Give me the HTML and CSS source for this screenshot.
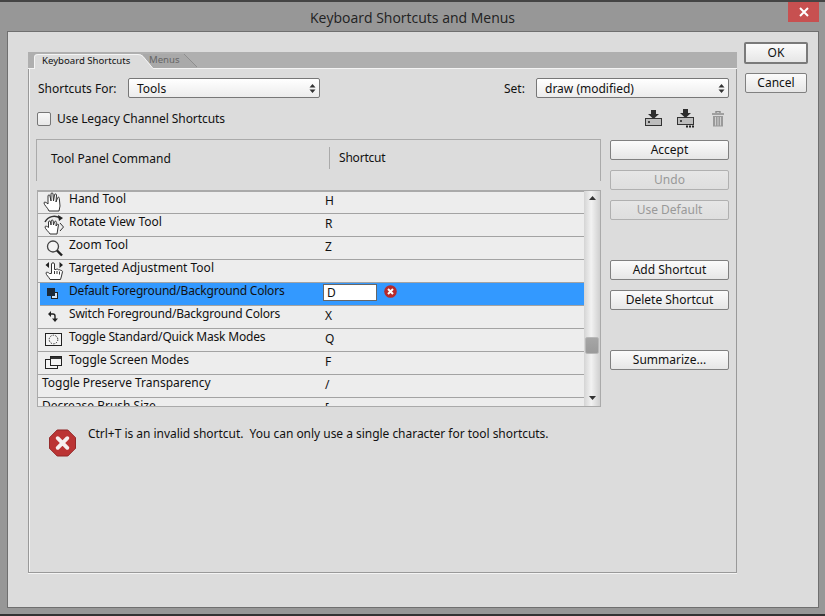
FILE: index.html
```html
<!DOCTYPE html>
<html lang="en">
<head>
<meta charset="utf-8">
<title>Keyboard Shortcuts and Menus</title>
<link rel="stylesheet" href="styles.css">
</head>
<body>
<header class="titlebar">
  <span class="title">Keyboard Shortcuts and Menus</span>
  <div class="close"><svg width="12" height="12" viewBox="0 0 12 12"><path d="M2 2l8 8M10 2l-8 8" stroke="#fff" stroke-width="2"/></svg></div>
</header>
<main class="dialog">
  <section class="panel">
    <div class="tabstrip">
      <div class="tab tab-active">
        <svg class="tab-bg" width="120" height="16" viewBox="0 0 120 16"><path d="M0 16V4Q0 1 4 1H104Q107 1 109 3L119 15V16Z" fill="#dcdcdc"/><path d="M.5 16V4Q.5 1.500 4 1.500H104Q107 1.500 109 3.500L119 15.500" fill="none" stroke="#f4f4f4"/></svg>
        <span class="tab-label">Keyboard Shortcuts</span>
      </div>
      <div class="tab tab-idle">
        <svg class="tab-bg" width="56" height="16" viewBox="0 0 56 16"><path d="M0 2H41L54 15V16H0Z" fill="#a9a9a9"/><path d="M41 2L54 15" fill="none" stroke="#8e8e8e"/></svg>
        <span class="tab-label">Menus</span>
      </div>
    </div>
    <div class="panel-body">
      <div class="row-for">
        <span class="lbl lbl-for">Shortcuts For:</span>
        <div class="select sel-for"><span>Tools</span><svg width="7" height="11" viewBox="0 0 7 11"><path d="M3.500 1L6.500 4.500H.5ZM3.500 10L.5 6.500H6.500Z" fill="#333"/></svg></div>
        <span class="lbl lbl-set">Set:</span>
        <div class="select sel-set"><span>draw (modified)</span><svg width="7" height="11" viewBox="0 0 7 11"><path d="M3.500 1L6.500 4.500H.5ZM3.500 10L.5 6.500H6.500Z" fill="#333"/></svg></div>
      </div>
      <div class="row-legacy">
        <span class="check"></span>
        <span class="lbl lbl-check">Use Legacy Channel Shortcuts</span>
        <div class="tools">
          <svg width="18" height="19" viewBox="0 0 18 19"><path d="M6 1h5v4h3l-5.500 5L3 5h3z" fill="#2d2d2d"/><rect x=".5" y="9.500" width="16" height="7" fill="#bdbdbd" stroke="#333"/><rect x="3" y="12" width="2" height="2" fill="#444"/></svg>
          <svg width="18" height="19" viewBox="0 0 18 19"><path d="M6 0h5v4h3L8.500 9 3 4h3z" fill="#2d2d2d"/><rect x=".5" y="8.500" width="16" height="7" fill="#bdbdbd" stroke="#333"/><rect x="3" y="11" width="2" height="2" fill="#444"/><path d="M9 16.500h2v2H9zM12 16.500h2v2h-2zM15 16.500h2v2h-2z" fill="#222"/></svg>
          <svg width="12" height="16" viewBox="0 0 12 16"><path d="M4 2V.5h4V2M0 3h12" fill="none" stroke="#8c8c8c" stroke-width="1.400"/><path d="M1 5h10v10.500H1z" fill="#9a9a9a"/><path d="M3.500 6v8.500M6 6v8.500M8.500 6v8.500" stroke="#d0d0d0"/></svg>
        </div>
      </div>
      <div class="work">
        <div class="table-col">
          <div class="thead">
            <span class="th th-cmd">Tool Panel Command</span>
            <span class="th th-key">Shortcut</span>
          </div>
          <div class="list">
            <div class="rows">
              <div class="tr">
                <span class="ico"><svg width="22" height="22" viewBox="0 0 22 22"><path d="M6 20c-1-3-5-6-5-8 0-1.500 2-1 4 1V5c0-1.500 2-1.500 2 0l1 5V3c0-1.500 2-1.500 2 0l.5 7 1-6c0-1.500 2-1.300 2 0l-.5 7 1.500-4c.5-1.300 2-1 1.800.5L17 15l-1 5z" fill="#fff" stroke="#333"/></svg></span>
                <span class="name">Hand Tool</span><span class="key">H</span>
              </div>
              <div class="tr">
                <span class="ico"><svg width="22" height="22" viewBox="0 0 22 22"><path d="M2 8C5 2 12 1 17 4" fill="none" stroke="#333" stroke-width="1.500"/><path d="M15 1l5 3-4 3z" fill="#222"/><path d="M7 20c-1-2-5-5-5-7 0-1.300 2-1 3.500.5L5.500 8c0-1.300 2-1.300 2 0l.5 3 .2-4c0-1.300 2-1.300 2 0l.3 4 1-3c.3-1.200 2-1 1.800.3L13 12l1.500-2 1 .5L14 20z" fill="#fff" stroke="#333"/><path d="M17 9l3.500 4-3.500 4" fill="none" stroke="#333"/></svg></span>
                <span class="name">Rotate View Tool</span><span class="key">R</span>
              </div>
              <div class="tr">
                <span class="ico"><svg width="22" height="22" viewBox="0 0 22 22"><circle cx="10" cy="9.500" r="5.500" fill="#f4f4f4" stroke="#444" stroke-width="1.300"/><path d="M14 13.500L19 18.500" stroke="#222" stroke-width="2.400"/></svg></span>
                <span class="name">Zoom Tool</span><span class="key">Z</span>
              </div>
              <div class="tr">
                <span class="ico"><svg width="22" height="22" viewBox="0 0 22 22"><path d="M2.500 5L6 2v6zM20 5l-3.500-3v6z" fill="#222"/><path d="M7 19.500C6 17 3 15 3 13c0-1.200 2-1 3.500.5h2V4c0-1.600 3-1.600 3 0v5.500H13c1-.8 2.300-.4 2.500.5 1-.6 2.200-.2 2.500.7.800-.4 1.500.2 1.500 1l-1 4.300-1 3.500z" fill="#fff" stroke="#333"/><path d="M11.500 11v3M14 11v3M16.500 11.500v3" stroke="#333"/></svg></span>
                <span class="name">Targeted Adjustment Tool</span><span class="key"></span>
              </div>
              <div class="tr tr-sel">
                <span class="ico"><svg width="22" height="22" viewBox="0 0 22 22"><rect x="8.500" y="9.500" width="6" height="6" fill="#cfe3f7" stroke="#222"/><rect x="4" y="5" width="8" height="8" fill="#1c2a3a"/></svg></span>
                <span class="name name-tight">Default Foreground/Background Colors</span>
                <span class="key key-edit"><span class="edit">D</span><svg class="err-small" width="13" height="13" viewBox="0 0 13 13"><circle cx="6.500" cy="6.500" r="6.300" fill="#b52a2c"/><path d="M4 4l5 5M9 4l-5 5" stroke="#fff" stroke-width="2"/></svg></span>
              </div>
              <div class="tr">
                <span class="ico"><svg width="22" height="22" viewBox="0 0 22 22"><path d="M7 8h3a2 2 0 0 1 2 2v3" fill="none" stroke="#222" stroke-width="1.400"/><path d="M8 5v6L5 8zM9 12.500h6L12 16z" fill="#222"/></svg></span>
                <span class="name name-tight">Switch Foreground/Background Colors</span><span class="key">X</span>
              </div>
              <div class="tr">
                <span class="ico"><svg width="22" height="22" viewBox="0 0 22 22"><rect x="2.500" y="4.500" width="16" height="12" fill="#f4f4f4" stroke="#222"/><circle cx="10.500" cy="10.500" r="4.300" fill="none" stroke="#333" stroke-dasharray="1.500 1.200"/></svg></span>
                <span class="name name-tight">Toggle Standard/Quick Mask Modes</span><span class="key">Q</span>
              </div>
              <div class="tr">
                <span class="ico"><svg width="22" height="22" viewBox="0 0 22 22"><rect x="2.500" y="7.500" width="12" height="9" fill="#f4f4f4" stroke="#222"/><rect x="7.500" y="4.500" width="11" height="9" fill="#f4f4f4" stroke="#222"/><path d="M8 5h10v2H8z" fill="#333"/></svg></span>
                <span class="name">Toggle Screen Modes</span><span class="key">F</span>
              </div>
              <div class="tr tr-plain">
                <span class="name">Toggle Preserve Transparency</span><span class="key">/</span>
              </div>
              <div class="tr tr-plain">
                <span class="name">Decrease Brush Size</span><span class="key">[</span>
              </div>
            </div>
            <div class="scrollbar">
              <svg class="arrow-up" width="7" height="4" viewBox="0 0 7 4"><path d="M3.500 0L7 4H0z" fill="#333"/></svg>
              <span class="thumb"></span>
              <svg class="arrow-down" width="7" height="4" viewBox="0 0 7 4"><path d="M3.500 4L0 0h7z" fill="#333"/></svg>
            </div>
          </div>
          <div class="error">
            <svg width="27" height="28" viewBox="0 0 28 28"><path d="M8.500 .5h11l8 8v11l-8 8h-11l-8-8v-11z" fill="#bb3434" stroke="#912424"/><path d="M9 9l10 10M19 9L9 19" stroke="#f6f0f0" stroke-width="4" stroke-linecap="round"/></svg>
            <p class="err-text">Ctrl+T is an invalid shortcut.&nbsp; You can only use a single character for tool shortcuts.</p>
          </div>
        </div>
        <div class="actions">
          <button class="btn">Accept</button>
          <button class="btn btn-off">Undo</button>
          <button class="btn btn-off">Use Default</button>
          <button class="btn btn-gap">Add Shortcut</button>
          <button class="btn">Delete Shortcut</button>
          <button class="btn btn-gap">Summarize...</button>
        </div>
      </div>
    </div>
  </section>
  <aside class="side">
    <button class="btn btn-ok">OK</button>
    <button class="btn btn-cancel">Cancel</button>
  </aside>
</main>
</body>
</html>
```
FILE: styles.css
```css
* { box-sizing: border-box; }
html, body { margin: 0; height: 100%; }
body {
  display: flex;
  flex-direction: column;
  height: 616px;
  background: #979797;
  border-top: 2px solid #444;
  border-bottom: 2px solid #333;
  font: 12px/15px "Noto Sans", sans-serif;
  color: #111;
  overflow: hidden;
}
.titlebar { position: relative; height: 29px; display: flex; align-items: center; justify-content: center; }
.title { font: 14px/18px "Open Sans", sans-serif; color: #222; padding-top: 2px; }
.close { position: absolute; top: 0; right: 6px; width: 31px; height: 20px; background: #c75050; display: flex; align-items: center; justify-content: center; }
.dialog { flex: 1; display: flex; margin: 0 6px 6px 7px; padding: 20px 0 34px 20px; background: #dcdcdc; border: 1px solid #6f6f6f; }
.panel { width: 709px; display: flex; flex-direction: column; border: solid #999; border-width: 0 1px 1px; box-shadow: inset 1px 0 #f4f4f4, 0 1px #f4f4f4; }
.tabstrip { height: 17px; display: flex; align-items: flex-end; margin: 0 -1px; padding-left: 6px; background: #afafaf; border-bottom: 1px solid #f4f4f4; }
.tab { position: relative; height: 16px; flex: none; font-size: 9.600px; line-height: 15px; }
.tab-bg { position: absolute; left: 0; top: 0; }
.tab-label { position: relative; display: block; }
.tab-active { width: 120px; margin-bottom: -1px; padding: 0 0 0 8px; z-index: 1; }
.tab-idle { width: 56px; margin-left: -11px; padding: 0 0 0 6px; color: #666; }
.panel-body { flex: 1; padding: 9px 7px 0 7px; }
.row-for { display: flex; align-items: center; height: 20px; padding-left: 2px; }
.lbl-for { width: 90px; }
.lbl-set { margin-left: auto; width: 32px; }
.select { height: 20px; display: flex; align-items: center; justify-content: space-between; padding: 1px 3px 0 8px; background: linear-gradient(#fff, #ececec); border: 1px solid #777; border-radius: 2px; }
.sel-for { width: 192px; }
.sel-set { width: 193px; }
.row-legacy { display: flex; align-items: center; height: 19px; margin-top: 11px; padding-left: 1px; }
.check { width: 14px; height: 14px; border: 1px solid #777; border-radius: 2px; background: linear-gradient(#f8f8f8, #e8e8e8); margin-right: 6px; }
.lbl-check { letter-spacing: -.07px; }
.tools { margin-left: auto; margin-right: 5px; display: flex; align-items: center; gap: 14px; }
.tools svg:last-child { margin-left: 3px; }
.work { display: flex; margin-top: 11px; }
.table-col { width: 565px; }
.thead { height: 42px; display: flex; align-items: center; border: solid #aaa; border-width: 1px 1px 0; padding-bottom: 5px; }
.th-cmd { width: 292px; padding-left: 14px; }
.th-key { height: 22px; line-height: 22px; padding-left: 9px; border-left: 1px solid #aaa; letter-spacing: -.2px; }
.list { display: flex; height: 217px; margin: 9px 0 0 1px; background: #ededed; border: 1px solid #aaa; box-shadow: inset 0 1px #aaa; overflow: hidden; }
.rows { width: 546px; flex: none; }
.tr { display: flex; height: 23px; border-bottom: 1px solid #a3a3a3; }
.ico { flex: none; width: 31px; padding: 0 0 0 5px; }
.ico svg { display: block; }
.name { width: 256px; flex: none; line-height: 15px; }
.name-tight { letter-spacing: -.2px; }
.key { padding-top: 2px; }
.tr-plain .name { width: 287px; padding-left: 4px; }
.tr-sel { margin-left: 2px; background: #3399ff; }
.tr-sel .ico { width: 29px; padding-left: 3px; }
.key-edit { display: flex; align-items: flex-start; padding-top: 1px; margin-left: -2px; }
.edit { width: 54px; height: 17px; padding: 0 0 0 3px; background: #fff; border: 1px solid #666; }
.err-small { margin: 1px 0 0 7px; }
.scrollbar { flex: 1; display: flex; flex-direction: column; align-items: center; padding: 5px 0 6px; background: linear-gradient(90deg, #d4d4d4, #f2f2f2 45%, #cfcfcf); }
.thumb { width: 14px; height: 17px; margin-top: auto; margin-bottom: 42px; background: linear-gradient(#a6a6a6, #9a9a9a); border: 1px solid #b8b8b8; border-radius: 2px; }
.error { display: flex; gap: 12px; margin-top: 22px; padding-left: 13px; }
.err-text { margin: -3px 0 0; padding: 0; letter-spacing: -.03px; }
.actions { display: flex; flex-direction: column; gap: 10px; margin: 1px 0 0 9px; width: 119px; }
.btn { height: 20px; padding: 0; font: 12px/16px "Noto Sans", sans-serif; color: #111; background: linear-gradient(#fbfbfb, #e6e6e6); border: 1px solid #808080; border-radius: 2px; }
.btn-off { color: #999; background: linear-gradient(#e6e6e6, #dedede); border-color: #b0b0b0; }
.btn-gap { margin-top: 30px; }
.side { display: flex; flex-direction: column; align-items: center; width: 64px; margin: -10px 0 0 7px; }
.btn-ok { width: 64px; height: 22px; border: 2px solid #7a7a7a; }
.btn-cancel { width: 62px; height: 20px; margin-top: 9px; }
```
